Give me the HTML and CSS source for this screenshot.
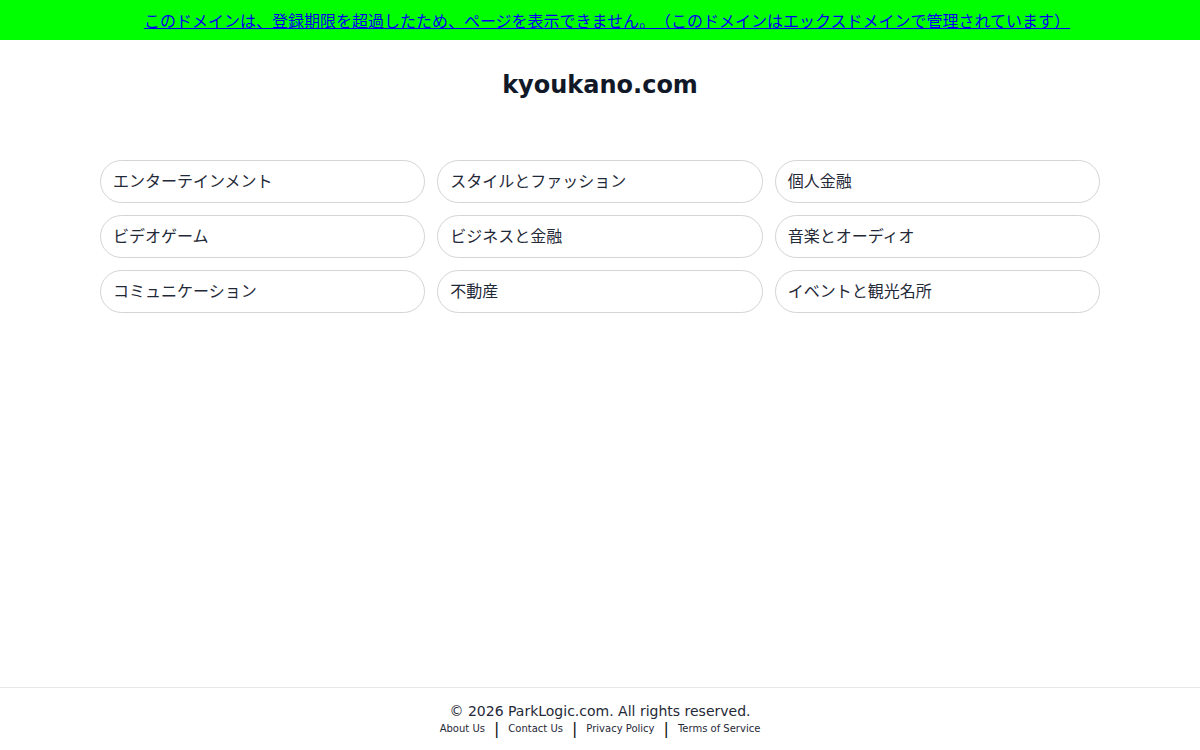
FILE: index.html
```html
<!DOCTYPE html>
<html lang="ja">
<head>
<meta charset="utf-8">
<title>kyoukano.com</title>
<link rel="stylesheet" href="styles.css">
</head>
<body>
<div class="page">
  <div class="notice">
    <a href="#">このドメインは、登録期限を超過したため、ページを表示できません。（このドメインはエックスドメインで管理されています）</a>
  </div>
  <main class="main">
    <h1 class="domain">kyoukano.com</h1>
    <div class="topics">
      <a class="topic" href="#">エンターテインメント</a>
      <a class="topic" href="#">スタイルとファッション</a>
      <a class="topic" href="#">個人金融</a>
      <a class="topic" href="#">ビデオゲーム</a>
      <a class="topic" href="#">ビジネスと金融</a>
      <a class="topic" href="#">音楽とオーディオ</a>
      <a class="topic" href="#">コミュニケーション</a>
      <a class="topic" href="#">不動産</a>
      <a class="topic" href="#">イベントと観光名所</a>
    </div>
  </main>
  <footer class="footer">
    <p class="copy">© 2026 ParkLogic.com. All rights reserved.</p>
    <nav class="links">
      <a href="#">About Us</a>
      <span class="sep">|</span>
      <a href="#">Contact Us</a>
      <span class="sep">|</span>
      <a href="#">Privacy Policy</a>
      <span class="sep">|</span>
      <a href="#">Terms of Service</a>
    </nav>
  </footer>
</div>
</body>
</html>
```

FILE: styles.css
```css
html, body {
  margin: 0;
  padding: 0;
  background: #ffffff;
}

body {
  font-family: "DejaVu Sans", "Noto Sans CJK JP", sans-serif;
  color: #1f2937;
}

.page {
  min-height: 100vh;
  display: flex;
  flex-direction: column;
}

.notice {
  background: #00ff00;
  height: 40px;
  padding-left: 14px;
  display: flex;
  align-items: center;
  justify-content: center;
  font-size: 16px;
  text-spacing-trim: space-all;
}

.notice a {
  color: #0000ee;
  text-decoration: underline;
}

.main {
  flex: 1;
  display: flex;
  flex-direction: column;
  align-items: center;
}

.domain {
  margin: 30px 0 0;
  font-size: 24px;
  line-height: 30px;
  font-weight: bold;
  color: #111827;
}

.topics {
  margin-top: 60px;
  width: 1000px;
  display: grid;
  grid-template-columns: repeat(3, 1fr);
  column-gap: 12px;
  row-gap: 12px;
}

.topic {
  display: flex;
  align-items: center;
  box-sizing: content-box;
  height: 38px;
  padding: 0 12px 3px;
  border: 1px solid #d4d4d8;
  border-radius: 22px;
  color: #1f2937;
  font-size: 16px;
  text-decoration: none;
}

.footer {
  border-top: 1px solid #e5e7eb;
  padding: 14px 0 13px;
  text-align: center;
}

.copy {
  margin: 0;
  font-size: 14px;
  line-height: 18px;
  color: #1f2937;
}

.links {
  display: flex;
  justify-content: center;
  align-items: center;
  gap: 9px;
  margin-top: 1px;
  font-size: 10px;
  line-height: 16px;
}

.links a {
  color: #1f2937;
  text-decoration: none;
}

.links .sep {
  font-size: 16px;
  line-height: 16px;
  color: #111111;
}
```
